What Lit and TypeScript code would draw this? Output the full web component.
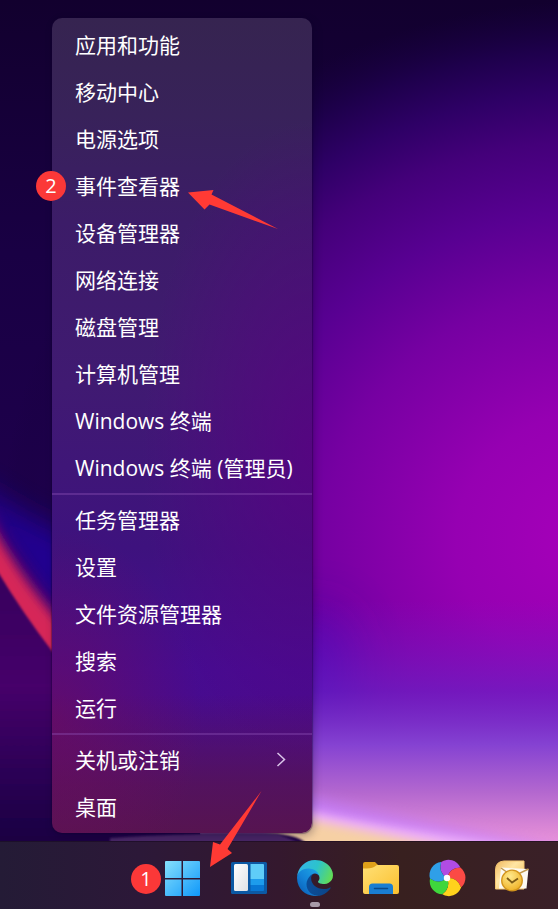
import { LitElement, html, css, svg, nothing } from "lit";
import { customElement } from "lit/decorators.js";

interface Entry {
  label: string;
  submenu?: boolean;
  step?: number;
}

const groups: Entry[][] = [
  [
    { label: "应用和功能" },
    { label: "移动中心" },
    { label: "电源选项" },
    { label: "事件查看器", step: 2 },
    { label: "设备管理器" },
    { label: "网络连接" },
    { label: "磁盘管理" },
    { label: "计算机管理" },
    { label: "Windows 终端" },
    { label: "Windows 终端 (管理员)" },
  ],
  [
    { label: "任务管理器" },
    { label: "设置" },
    { label: "文件资源管理器" },
    { label: "搜索" },
    { label: "运行" },
  ],
  [{ label: "关机或注销", submenu: true }, { label: "桌面" }],
];

@customElement("desktop-wallpaper")
class DesktopWallpaper extends LitElement {
  static styles = css`
    :host { display: block; }
    .art { display: block; width: 100%; height: 100%; }
  `;
  render() {
    return html`<svg class="art" viewBox="0 0 558 841" preserveAspectRatio="none" aria-hidden="true">
      <defs>
        <linearGradient id="night" x1="0" y1="0" x2="0" y2="1">
          <stop offset="0" stop-color="#12002e" />
          <stop offset=".3" stop-color="#190044" />
          <stop offset=".6" stop-color="#1e004c" />
          <stop offset="1" stop-color="#200850" />
        </linearGradient>
        <radialGradient id="glow" gradientUnits="userSpaceOnUse" cx="0" cy="0" r="1" gradientTransform="translate(600 540) scale(600 540)">
          <stop offset="0" stop-color="#a800ba" />
          <stop offset=".24" stop-color="#9600b2" />
          <stop offset=".46" stop-color="#7600a2" />
          <stop offset=".61" stop-color="#580092" />
          <stop offset=".74" stop-color="#44007a" />
          <stop offset=".83" stop-color="#2e0066" />
          <stop offset=".91" stop-color="#1e004c" />
          <stop offset="1" stop-color="#180040" stop-opacity="0" />
        </radialGradient>
        <linearGradient id="dawn" x1="0" y1="600" x2="0" y2="841" gradientUnits="userSpaceOnUse">
          <stop offset="0" stop-color="#7a18c4" stop-opacity="0" />
          <stop offset=".38" stop-color="#6c24c8" stop-opacity=".65" />
          <stop offset=".6" stop-color="#8542d2" />
          <stop offset=".8" stop-color="#b468cf" />
          <stop offset="1" stop-color="#e892d8" />
        </linearGradient>
        <linearGradient id="under" x1="0" y1="560" x2="0" y2="841" gradientUnits="userSpaceOnUse">
          <stop offset="0" stop-color="#34005c" />
          <stop offset=".45" stop-color="#46006a" />
          <stop offset=".75" stop-color="#2c0056" />
          <stop offset="1" stop-color="#1a0442" />
        </linearGradient>
        <filter id="b7" filterUnits="userSpaceOnUse" x="-100" y="0" width="760" height="1000"><feGaussianBlur stdDeviation="7" /></filter>
        <filter id="b5" filterUnits="userSpaceOnUse" x="-100" y="0" width="760" height="1000"><feGaussianBlur stdDeviation="5" /></filter>
        <filter id="b1" filterUnits="userSpaceOnUse" x="-100" y="0" width="760" height="1000"><feGaussianBlur stdDeviation="1" /></filter>
        <filter id="b14" filterUnits="userSpaceOnUse" x="-100" y="0" width="760" height="1000"><feGaussianBlur stdDeviation="14" /></filter>
        <filter id="b28" filterUnits="userSpaceOnUse" x="-100" y="0" width="760" height="1000"><feGaussianBlur stdDeviation="28" /></filter>
      </defs>
      <rect width="558" height="841" fill="url(#night)" />
      <rect width="558" height="841" fill="url(#glow)" />
      <ellipse cx="312" cy="670" rx="36" ry="55" fill="#3a06b4" opacity=".75" filter="url(#b28)" />
      <rect x="200" y="600" width="358" height="241" fill="url(#dawn)" />
      <path d="M290 792Q380 816 600 856V880H290Z" fill="#c27cff" filter="url(#b7)" opacity=".75" />
      <path d="M290 806Q370 826 600 858V890H280Z" fill="#eeb0f8" filter="url(#b5)" />
      <path d="M270 812Q350 828 440 846L440 890H270Z" fill="#f6d0a4" filter="url(#b5)" />
      <path d="M-30 500Q12 570 80 650L80 540Q30 520 -30 480Z" fill="#220098" opacity=".9" filter="url(#b14)" />
      <path d="M-20 496Q16 568 80 636V690H-20Z" fill="#8a1070" opacity=".8" filter="url(#b7)" />
      <path d="M-20 504Q14 580 80 647V700H-20Z" fill="#d62858" filter="url(#b5)" />
      <path d="M-20 541Q14 602 52 651L200 834H270Q296 834 306 843H-20Z" fill="url(#under)" filter="url(#b1)" />
      <path d="M110 838Q200 832 278 834L300 843H110Z" fill="#4a2866" filter="url(#b1)" />
    </svg>`;
  }
}

@customElement("start-menu")
class StartMenu extends LitElement {
  static styles = css`
    :host { display: block; }
    .menu {
      box-sizing: border-box;
      padding: 3px 0;
      border-radius: 10px;
      background:
        radial-gradient(ellipse 150px 190px at 0 86%, rgba(110, 12, 90, 0.65), rgba(110, 12, 90, 0) 100%),
        linear-gradient(to top, #561450 0, rgba(86, 20, 80, 0.75) 6%, rgba(86, 20, 80, 0) 17%),
        radial-gradient(ellipse 170px 330px at 100% 53%, rgba(92, 0, 132, 0.75), rgba(92, 0, 132, 0) 100%),
        linear-gradient(#362450 0, #38225a 12%, #3c1c68 25%, #401a72 45%, #3e127e 65%, #460b90 80%, #4c0c88 100%);
      box-shadow: 0 0 1px 1px rgba(20, 0, 50, 0.35), 2px 3px 8px rgba(10, 0, 40, 0.3);
    }
    .item {
      position: relative;
      display: flex;
      align-items: center;
      box-sizing: border-box;
      width: 100%;
      height: 47px;
      margin: 0;
      padding: 0 25px 0 23px;
      border: 0;
      background: none;
      color: #fff;
      font: 21px/30px "Open Sans", "Noto Sans CJK SC", sans-serif;
      text-align: left;
      white-space: nowrap;
    }
    .label { flex: 1; }
    .chevron { width: 12px; height: 18px; }
    .rule {
      height: 2px;
      margin: 2px 0 1px;
      border: 0;
      background: rgba(140, 80, 180, 0.4);
    }
    .step { position: absolute; left: -16px; top: 9px; }
    .pointer {
      position: absolute;
      left: 136px;
      top: 27px;
      width: 92px;
      height: 42px;
      z-index: 1;
      pointer-events: none;
    }
  `;
  private entry(e: Entry) {
    return html`<button class="item" role="menuitem">
      <span class="label">${e.label}</span>
      ${e.submenu
        ? html`<svg class="chevron" viewBox="0 0 12 18" aria-hidden="true">
            <path d="M2.5 2 9.500 8.500l-7 6.500" fill="none" stroke="#d9c4e8" stroke-width="1.500" />
          </svg>`
        : nothing}
      ${e.step
        ? html`<step-badge class="step">${e.step}</step-badge>
            <svg class="pointer" viewBox="0 0 92 42" aria-hidden="true">
              <path d="M0 3.500 25.500 1 23.500 5.500 90 40 21.500 15.500 16.500 20.500Z" fill="#ff3a34" />
            </svg>`
        : nothing}
    </button>`;
  }
  render() {
    return html`<nav class="menu" role="menu">
      ${groups.map((g, i) => html`${i ? html`<hr class="rule" />` : nothing}${g.map((e) => this.entry(e))}`)}
    </nav>`;
  }
}

@customElement("step-badge")
class StepBadge extends LitElement {
  static styles = css`
    :host {
      display: flex;
      align-items: center;
      justify-content: center;
      width: 30px;
      height: 30px;
      border-radius: 50%;
      background: #fb3838;
      color: #fff;
      font: 20px/28px "Open Sans", sans-serif;
    }
  `;
  render() {
    return html`<slot></slot>`;
  }
}

const petals = ["#b04ce4", "#fb4a45", "#ffd21c", "#3fd63c", "#2f9fe8"];

const icons = [
  {
    name: "开始",
    art: svg`<defs>
      <linearGradient id="wg" gradientUnits="userSpaceOnUse" x1="2" y1="2" x2="38" y2="38"><stop offset="0" stop-color="#86e0fc"/><stop offset="1" stop-color="#0c96fa"/></linearGradient></defs>
      <path d="M3 2h15.500v17H2V3a1 1 0 0 1 1-1ZM20 2h16a1 1 0 0 1 1 1v16H20ZM2 20.500h16.500V37H3a1 1 0 0 1-1-1ZM20 20.500h17V36a1 1 0 0 1-1 1H20Z" fill="url(#wg)"/>`,
  },
  {
    name: "小组件",
    art: svg`<defs><linearGradient id="pane" x1="0" y1="0" x2="1" y2="1"><stop offset="0" stop-color="#fff"/><stop offset="1" stop-color="#dfe2e6"/></linearGradient></defs>
      <rect x="2" y="3" width="36" height="32" rx="1.500" fill="#0c59a4"/>
      <rect x="5" y="5" width="14" height="27" rx="1.500" fill="url(#pane)"/>
      <path d="M21.500 5H34a1 1 0 0 1 1 1v14H21.500Z" fill="#5fcdf8"/>
      <path d="M21.500 20H35v6H21.500Z" fill="#1d9cec"/>
      <path d="M21.500 26H35v5a1 1 0 0 1-1 1H21.500Z" fill="#0877d4"/>`,
  },
  {
    name: "Microsoft Edge",
    art: svg`<defs>
      <linearGradient id="e1" x1=".2" y1=".5" x2="1" y2=".5"><stop offset="0" stop-color="#0c4c96"/><stop offset="1" stop-color="#0a4588"/></linearGradient>
      <linearGradient id="e2" x1=".8" y1=".2" x2=".2" y2=".9"><stop offset="0" stop-color="#1b9de2"/><stop offset=".5" stop-color="#1484d8"/><stop offset="1" stop-color="#0b64bc"/></linearGradient>
      <linearGradient id="e3" x1="0" y1=".3" x2="1" y2=".6"><stop offset="0" stop-color="#35b5e8"/><stop offset=".5" stop-color="#2cc3cc"/><stop offset="1" stop-color="#62dc56"/></linearGradient></defs>
      <g transform="translate(2 1) scale(.1406)">
        <path transform="translate(0 -4)" d="M235.680 199.460a93.730 93.730 0 0 1-10.540 4.710 101.870 101.870 0 0 1-35.900 6.460c-47.320 0-88.540-32.550-88.540-74.320A31.480 31.480 0 0 1 117.130 105c-42.800 1.800-53.800 46.400-53.800 72.530 0 73.880 68.090 81.370 82.760 81.370 7.910 0 19.840-2.300 27-4.560l1.310-.44a128.340 128.340 0 0 0 66.600-52.800 4 4 0 0 0-5.320-1.640z" fill="url(#e1)"/>
        <path d="M105.730 241.420a79.200 79.200 0 0 1-22.740-21.340 80.720 80.720 0 0 1 29.530-120c3.120-1.470 8.450-4.130 15.540-4a32.350 32.350 0 0 1 25.690 13 31.880 31.880 0 0 1 6.360 18.660c0-.21 24.460-79.600-80-79.600-43.900 0-80 41.660-80 78.210a130.150 130.150 0 0 0 12.110 56 128 128 0 0 0 156.380 67.110 75.550 75.550 0 0 1-62.780-8z" fill="url(#e2)"/>
        <path d="M152.330 148.860c-.81 1.050-3.300 2.500-3.300 5.660 0 2.610 1.700 5.120 4.720 7.230 14.380 10 41.490 8.680 41.560 8.680a59.560 59.560 0 0 0 30.270-8.350 61.380 61.380 0 0 0 30.430-52.880c.26-22.410-8-37.310-11.340-43.910C223.460 23.840 177.720 0 128 0A128 128 0 0 0 0 126.200c.48-36.540 36.800-66.050 80-66.050 3.500 0 23.460.34 42 10.070 16.340 8.580 24.900 18.940 30.850 29.210 6.180 10.670 7.280 24.150 7.280 29.520s-2.740 13.330-7.800 19.910z" fill="url(#e3)"/>
      </g>`,
    active: true,
  },
  {
    name: "文件资源管理器",
    art: svg`<defs><linearGradient id="f" x1="0" y1="0" x2="1" y2="1"><stop offset="0" stop-color="#ffe076"/><stop offset="1" stop-color="#fbc02e"/></linearGradient></defs>
      <path d="M2 5a2 2 0 0 1 2-2h10l4 4v5H2Z" fill="#dfa01a"/>
      <path d="M2 9.500q8 0 11-1.500l3-2h20a2 2 0 0 1 2 2v25a2 2 0 0 1-2 2H4a2 2 0 0 1-2-2Z" fill="url(#f)"/>
      <path d="M8 35v-7a3.500 3.500 0 0 1 3.500-3.500h17A3.500 3.500 0 0 1 32 28v7Z" fill="#1a7ed2"/>
      <path d="M13.500 29.500h13" stroke="#0b4a8a" stroke-width="1.500" stroke-linecap="round"/>`,
  },
  {
    name: "浏览器",
    art: svg`<g transform="translate(20 19)">
      ${petals.map((c, i) => svg`<path transform=${`rotate(${i * 72})`} d="M0 0Q-9 -5.500 -5.800 -16A13 13 0 0 1 13.400 -10.500Q2.400 -10.300 0 0Z" fill=${c}/>`)}
      <circle r="3.200" fill="#fff"/></g>`,
  },
  {
    name: "Outlook",
    art: svg`<defs><linearGradient id="o" x1="0" y1="0" x2="1" y2="1"><stop offset="0" stop-color="#f0b860"/><stop offset=".4" stop-color="#ffe6a4"/><stop offset="1" stop-color="#eeb64a"/></linearGradient>
      <radialGradient id="oc" cx=".4" cy=".3" r=".8"><stop offset="0" stop-color="#ffe98c"/><stop offset="1" stop-color="#eeac1c"/></radialGradient></defs>
      <path d="M11 2H31V30H2.500V11Q2.500 2.500 11 2Z" fill="url(#o)" stroke="#f4c673" stroke-width="1"/>
      <path d="M8 8.500 35.500 10l-2 19.500H6Z" fill="#fdfaf2"/>
      <path d="M8 9l12 8.500L35.500 10" fill="none" stroke="#c39a4e" stroke-width="1.500"/>
      <circle cx="19" cy="21.500" r="10.300" fill="url(#oc)" stroke="#d3951c" stroke-width="1.300"/>
      <path d="M14 19l5 4.500 6-4" fill="none" stroke="#7c5a16" stroke-width="1.800"/>`,
  },
];

@customElement("task-bar")
class TaskBar extends LitElement {
  static styles = css`
    :host {
      display: flex;
      height: 68px;
      padding-left: 150px;
      background: linear-gradient(90deg, #241b36 0, #2c1838 25%, #34182e 50%, #38201f 72%, #3a2028 100%);
      box-shadow: inset 0 1px 0 rgba(20, 5, 30, 0.5);
    }
    .app {
      position: relative;
      display: flex;
      align-items: center;
      justify-content: center;
      flex: 0 0 66px;
      margin: 0;
      padding: 0;
      border: 0;
      background: none;
    }
    .icon { display: block; width: 40px; height: 40px; margin-top: 8px; overflow: visible; }
    .running {
      position: absolute;
      left: 28px;
      bottom: 2px;
      width: 10px;
      height: 5px;
      border-radius: 3px;
      background: #a89aa8;
    }
    .step { position: absolute; left: -19px; top: 23px; }
    .pointer {
      position: absolute;
      left: 60px;
      top: -50px;
      width: 53px;
      height: 77px;
      z-index: 2;
      pointer-events: none;
    }
  `;
  render() {
    return html`${icons.map(
      (a, i) => html`<button class="app" aria-label=${a.name}>
        <svg class="icon" viewBox="0 0 40 40" aria-hidden="true">${a.art}</svg>
        ${a.active ? html`<span class="running"></span>` : nothing}
        ${i === 0
          ? html`<step-badge class="step">1</step-badge>
              <svg class="pointer" viewBox="0 0 53 77" aria-hidden="true">
                <path d="M51.500 0 17.500 58 22 62 0 76 3 51 10 53.500Z" fill="#ff3a34" />
              </svg>`
          : nothing}
      </button>`,
    )}`;
  }
}

@customElement("app-root")
class AppRoot extends LitElement {
  static styles = css`
    :host {
      display: flex;
      flex-direction: column;
      min-height: 100vh;
      overflow: hidden;
    }
    .desktop {
      position: relative;
      flex: 1;
      padding: 18px 52px 8px;
    }
    .wallpaper { position: absolute; inset: 0; }
    .menu { position: relative; width: 260px; }
    .bar { position: relative; }
  `;
  render() {
    return html`<main class="desktop">
        <desktop-wallpaper class="wallpaper"></desktop-wallpaper>
        <start-menu class="menu"></start-menu>
      </main>
      <task-bar class="bar"></task-bar>`;
  }
}
